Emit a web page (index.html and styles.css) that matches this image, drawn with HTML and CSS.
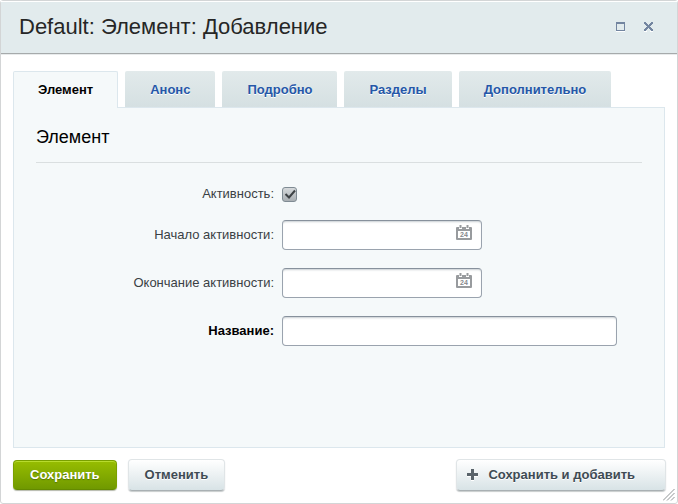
FILE: index.html
```html
<!DOCTYPE html>
<html lang="ru">
<head>
<meta charset="utf-8">
<title>Default: Элемент: Добавление</title>
<link rel="stylesheet" href="styles.css">
</head>
<body>
<form class="dialog">
  <header class="dialog-head">
    <h1 class="dialog-title">Default: Элемент: Добавление</h1>
    <button class="win-btn" type="button" aria-label="Развернуть">
      <svg width="9" height="10" viewBox="0 0 9 10" shape-rendering="crispEdges"><path fill="#fff" d="M0 9h9v1H0z"/><path fill="#7385a0" d="M0 0h9v9H0zM1 2v6h7V2z" fill-rule="evenodd"/></svg>
    </button>
    <button class="win-btn" type="button" aria-label="Закрыть">
      <svg width="9" height="10" viewBox="0 0 9 10" shape-rendering="crispEdges"><path fill="#fff" d="M0 9h3v1H0zM6 9h3v1H6z"/><path fill="#7385a0" d="M0 0h2v1h1v1h1v1h1V2h1V1h1V0h2v2H8v1H7v1H6v1h1v1h1v1h1v2H7V8H6V7H5V6H4v1H3v1H2v1H0V7h1V6h1V5h1V4H2V3H1V2H0z"/></svg>
    </button>
  </header>

  <main class="dialog-body">
    <nav class="tabs">
      <a class="tab tab-active" href="#element">Элемент</a>
      <a class="tab" href="#preview">Анонс</a>
      <a class="tab" href="#detail">Подробно</a>
      <a class="tab" href="#sections">Разделы</a>
      <a class="tab" href="#extra">Дополнительно</a>
    </nav>
    <section class="panel" id="element">
      <h2 class="panel-title">Элемент</h2>
      <div class="fields">
        <label for="active">Активность:</label>
        <input class="check" id="active" type="checkbox" checked>

        <label for="from">Начало активности:</label>
        <div class="date">
          <input class="text" id="from" type="text">
          <button class="cal" type="button" aria-label="Календарь">
            <svg width="16" height="15" viewBox="0 0 16 15"><path fill="#989b9e" fill-rule="evenodd" d="M0 3q0-1 1-1h14q1 0 1 1v11q0 1-1 1H1q-1 0-1-1zM2 6v7h12V6z"/><path stroke="#fff" stroke-width="3" d="M4.500 0v4M11.500 0v4"/><path stroke="#989b9e" stroke-width="2" d="M4.500 0v3M11.500 0v3"/><text class="cal-day" x="8" y="12">24</text></svg>
          </button>
        </div>

        <label for="to">Окончание активности:</label>
        <div class="date">
          <input class="text" id="to" type="text">
          <button class="cal" type="button" aria-label="Календарь">
            <svg width="16" height="15" viewBox="0 0 16 15"><path fill="#989b9e" fill-rule="evenodd" d="M0 3q0-1 1-1h14q1 0 1 1v11q0 1-1 1H1q-1 0-1-1zM2 6v7h12V6z"/><path stroke="#fff" stroke-width="3" d="M4.500 0v4M11.500 0v4"/><path stroke="#989b9e" stroke-width="2" d="M4.500 0v3M11.500 0v3"/><text class="cal-day" x="8" y="12">24</text></svg>
          </button>
        </div>

        <label class="required" for="name">Название:</label>
        <input class="text name" id="name" type="text">
      </div>
    </section>
  </main>

  <footer class="dialog-foot">
    <button class="btn btn-save" type="submit">Сохранить</button>
    <button class="btn" type="button">Отменить</button>
    <button class="btn btn-add" type="button">
      <svg width="11" height="12" viewBox="0 0 11 12" shape-rendering="crispEdges"><path fill="#fff" d="M0 5h4V1h3v4h4v3H7v4H4V8H0z"/><path fill="#59636a" d="M0 4h4V0h3v4h4v3H7v4H4V7H0z"/></svg>
      Сохранить и добавить
    </button>
  </footer>
  <svg class="grip" width="12" height="12" viewBox="0 0 12 12"><path d="M0 11.500L11.500 0M4 11.500L11.500 4M8 11.500L11.500 8" stroke="#8f9496" stroke-width="1"/></svg>
</form>
</body>
</html>
```
FILE: styles.css
```css
* {
  box-sizing: border-box;
}

body {
  margin: 0;
  background: #fff;
  color: #3a3f44;
  font: 13px/16px "Liberation Sans", Arial, sans-serif;
}

button {
  margin: 0;
  font: inherit;
  cursor: pointer;
}

svg {
  display: block;
  flex: none;
}

.dialog {
  position: relative;
  display: flex;
  flex-direction: column;
  min-height: 100vh;
  border: 1px solid #d3d5d6;
  border-radius: 3px;
}

.dialog-head {
  display: flex;
  align-items: center;
  gap: 19px;
  height: 53px;
  padding: 0 24px 2px 18px;
  border-top: 1px solid #fff;
  border-bottom: 1px solid #a6aaab;
  background: #e2ebed;
  box-shadow: 0 1px 0 #e8ebec;
}

.dialog-title {
  flex: 1;
  margin: 0;
  color: #262626;
  font-size: 22px;
  font-weight: normal;
  line-height: 26px;
}

.win-btn {
  padding: 0;
  border: 0;
  background: none;
}

.dialog-body {
  display: flex;
  flex: 1;
  flex-direction: column;
  padding: 17px 12px 0;
}

.tabs {
  display: flex;
  gap: 7px;
}

.tab {
  height: 36px;
  padding: 0 25px;
  border-radius: 2px 2px 0 0;
  background: linear-gradient(#e2eaeb, #d5e0e2);
  color: #2557a8;
  font-weight: bold;
  line-height: 37px;
  text-decoration: none;
  text-shadow: 0 1px 0 #fff;
}

.tab-active {
  height: 37px;
  margin-bottom: -1px;
  border: 1px solid #dce7ed;
  border-bottom: 0;
  padding: 0 24px;
  background: #f5f9fa;
  color: #000;
  line-height: 35px;
  z-index: 1;
}

.panel {
  flex: 1;
  padding: 19px 22px;
  border: 1px solid #dce7ed;
  background: #f5f9fa;
}

.panel-title {
  margin: 0 0 23px;
  padding-bottom: 15px;
  border-bottom: 1px solid #dadfe0;
  color: #000;
  font-size: 18px;
  font-weight: normal;
  line-height: 20px;
}

.fields {
  display: grid;
  grid-template-columns: 238px 1fr;
  gap: 18px 8px;
  align-items: center;
}

.fields label {
  text-align: right;
}

.fields .required {
  color: #000;
  font-weight: bold;
}

.check {
  width: 15px;
  height: 15px;
  margin: 0;
  border: 1px solid #7f8b93;
  border-radius: 3px;
  appearance: none;
  background:
    url("data:image/svg+xml,%3Csvg xmlns='http://www.w3.org/2000/svg' viewBox='0 0 13 13'%3E%3Cpath d='M2.500 6l3.500 3.500 6-7' fill='none' stroke='%233d4245' stroke-width='2'/%3E%3C/svg%3E"),
    linear-gradient(#d5d9db, #a9afb3);
}

.text {
  display: block;
  width: 100%;
  height: 30px;
  padding: 0 8px;
  border: 1px solid #9aa3ae;
  border-top-color: #87919c;
  border-radius: 4px;
  background: #fff;
  box-shadow: inset 0 2px 2px -1px #c8cfd2;
  font: inherit;
}

.name {
  max-width: 335px;
}

.date {
  position: relative;
  width: 200px;
}

.cal {
  position: absolute;
  top: 5px;
  right: 10px;
  padding: 0;
  border: 0;
  background: none;
}

.cal-day {
  fill: #85898d;
  font-size: 7px;
  font-weight: bold;
  text-anchor: middle;
}

.dialog-foot {
  display: flex;
  align-items: center;
  gap: 11px;
  padding: 11px 11px 12px 12px;
}

.btn {
  display: flex;
  align-items: center;
  gap: 10px;
  height: 32px;
  padding: 0 16px;
  border: 1px solid #e0e5e7;
  border-bottom-color: #a9b0b3;
  border-radius: 4px;
  background: linear-gradient(#fff, #d8e3e6);
  box-shadow: 0 1px 1px #c8cccd;
  color: #3f4b54;
  font-weight: bold;
  text-shadow: 0 1px 0 #fff;
}

.btn-save {
  height: 30px;
  border-color: #7aa000 #7aa000 #648a00;
  background: linear-gradient(#97bd00, #709900);
  box-shadow: 0 1px 1px #b5b9ab, inset 0 1px 0 #b8db2d;
  color: #fff;
  text-shadow: 0 1px 1px #557700;
}

.btn-add {
  margin-left: auto;
  padding: 0 30px 0 10px;
}

.grip {
  position: absolute;
  right: 2px;
  bottom: 2px;
}
```
